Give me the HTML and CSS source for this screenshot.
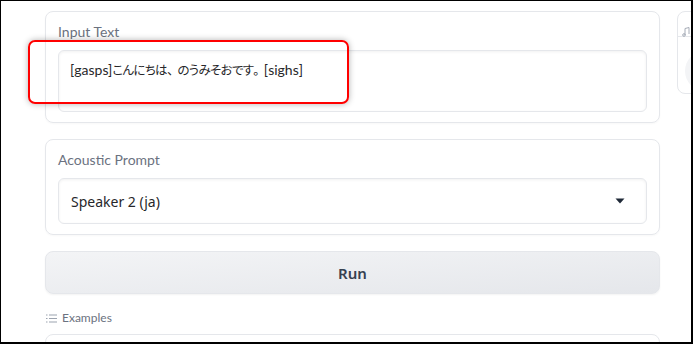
FILE: index.html
```html
<!DOCTYPE html>
<html>
<head>
  <meta charset="utf-8">
  <link rel="stylesheet" href="styles.css">
</head>
<body>
  <div class="frame">
    <div class="column">
      <div class="block">
        <div class="block-label">Input Text</div>
        <div class="textbox">[gasps]<span class="ja">こんにちは<span class="punct">、</span>のうみそおです<span class="punct">。</span></span>[sighs]</div>
      </div>

      <div class="block">
        <div class="block-label">Acoustic Prompt</div>
        <div class="dropdown">
          <span>Speaker 2 (ja)</span>
          <svg width="10" height="6" viewBox="0 0 10 6"><path d="M0.5 0.5 L9.5 0.5 L5 5.5 Z" fill="#1f2937"/></svg>
        </div>
      </div>

      <button class="run-btn">Run</button>

      <div class="examples">
        <svg width="11" height="9" viewBox="0 0 11 9">
          <g fill="#9ca3af">
            <rect x="0" y="0.5" width="1.5" height="1"/>
            <rect x="0" y="4" width="1.5" height="1"/>
            <rect x="0" y="7.5" width="1.5" height="1"/>
            <rect x="3" y="0.5" width="8" height="1"/>
            <rect x="3" y="4" width="8" height="1"/>
            <rect x="3" y="7.5" width="8" height="1"/>
          </g>
        </svg>
        <span>Examples</span>
      </div>

      <div class="examples-box"></div>
    </div>

    <div class="side">
      <div class="side-head">
        <svg width="8" height="10" viewBox="0 0 8 10"><path d="M3 8 V1.5 L7 0.5 V7" fill="none" stroke="#9ca3af" stroke-width="0.9"/><circle cx="2" cy="8" r="1.3" fill="none" stroke="#9ca3af" stroke-width="0.9"/></svg>
      </div>
      <div class="side-body">
        <div class="side-circle"></div>
      </div>
    </div>

    <div class="highlight"></div>
  </div>
</body>
</html>
```

FILE: styles.css
```css
html, body {
  margin: 0;
  padding: 0;
  background: #fff;
}
body {
  font-family: "Noto Sans", "Noto Sans CJK JP", sans-serif;
  color: #27272a;
}
.frame {
  position: relative;
  width: 693px;
  height: 344px;
  box-sizing: border-box;
  border-style: solid;
  border-color: #000;
  border-width: 1px 2px 2px 1px;
  overflow: hidden;
  display: flex;
  align-items: flex-start;
  gap: 17px;
  padding: 10px 0 0 44px;
}
.column {
  width: 615px;
  flex-shrink: 0;
  display: flex;
  flex-direction: column;
}
.column > * {
  flex-shrink: 0;
}
.block {
  border: 1px solid #e5e7eb;
  border-radius: 8px;
  padding: 12px 12px 10px;
  box-shadow: 0 1px 2px rgba(0,0,0,0.03);
}
.block + .block {
  margin-top: 16px;
}
.block-label {
  font-family: "Lato", sans-serif;
  font-size: 14px;
  line-height: 16px;
  color: #6b7280;
  margin-bottom: 10px;
}
.textbox {
  height: 62px;
  box-sizing: border-box;
  border: 1px solid #e5e7eb;
  border-radius: 6px;
  padding: 9px 11px 11px;
  font-family: "Lato", sans-serif;
  font-size: 14px;
  line-height: 20px;
  color: #27272a;
  box-shadow: inset 0 1px 3px rgba(0,0,0,0.06);
}
.ja {
  font-family: "Noto Sans CJK JP", sans-serif;
  font-feature-settings: "palt";
  font-size: 12.5px;
  letter-spacing: -0.7px;
}
.punct {
  font-feature-settings: normal;
  letter-spacing: -2px;
}
.dropdown {
  height: 46px;
  box-sizing: border-box;
  border: 1px solid #e5e7eb;
  border-radius: 6px;
  padding: 0 21px 0 12px;
  display: flex;
  align-items: center;
  justify-content: space-between;
  font-size: 14px;
  color: #27272a;
  box-shadow: inset 0 1px 3px rgba(0,0,0,0.06);
}
.run-btn {
  margin-top: 16px;
  height: 43px;
  border: 1px solid #e5e7eb;
  border-radius: 8px;
  background: linear-gradient(to bottom right, #f3f4f6, #e5e7eb);
  font-family: inherit;
  font-size: 15px;
  font-weight: 600;
  color: #374151;
  box-shadow: 0 1px 2px rgba(0,0,0,0.05);
}
.examples {
  margin-top: 16px;
  display: flex;
  align-items: center;
  gap: 5px;
  font-family: "Lato", sans-serif;
  font-size: 12px;
  line-height: 16px;
  color: #6b7280;
  padding-left: 1px;
}
.examples-box {
  margin-top: 8px;
  height: 40px;
  border: 1px solid #e5e7eb;
  border-radius: 8px;
}
.side {
  width: 80px;
  height: 83px;
  flex-shrink: 0;
  border: 1px solid #e5e7eb;
  border-radius: 8px;
  box-sizing: border-box;
}
.side-head {
  height: 25px;
  border-bottom: 1px solid #e5e7eb;
  padding: 8px 0 0 4px;
  box-sizing: border-box;
}
.side-body {
  padding: 14px 0 0 7px;
}
.side-circle {
  width: 40px;
  height: 40px;
  border-radius: 50%;
  background: #f3f4f6;
}
.highlight {
  position: absolute;
  left: 27px;
  top: 39px;
  width: 321px;
  height: 64px;
  box-sizing: border-box;
  border: 2px solid #ff0000;
  border-radius: 7px;
  box-shadow: 0 0 6px rgba(0,0,0,0.3);
}
```
